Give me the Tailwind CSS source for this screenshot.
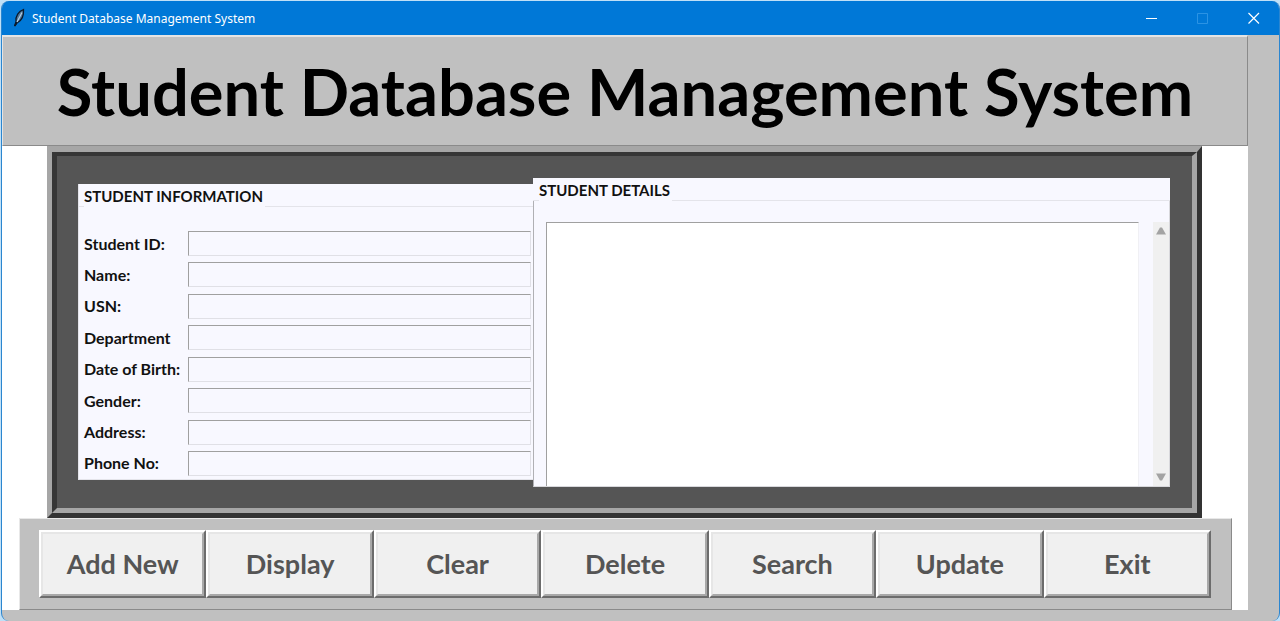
<!DOCTYPE html>
<html lang="en">
<head>
<meta charset="utf-8">
<title>Student Database Management System</title>
<script src="https://cdn.jsdelivr.net/npm/@tailwindcss/browser@4"></script>
</head>
<body class="h-screen overflow-hidden bg-[#bfe0f7] pt-px pl-px font-['Lato',sans-serif] text-black">
<div class="flex h-full flex-col overflow-hidden rounded-lg border-x border-[#2b86d0] bg-[#c0c0c0]">
  <header class="flex h-[34px] shrink-0 items-center bg-[#0078d7] text-white">
    <svg class="ml-2.5 mr-1.5 h-5 w-3.5" viewBox="0 0 14 20"><path d="M11.500 1.500C7 3 3 8 4 14L2.500 18L5 15C9 13 12 8 11.500 1.500Z" fill="#4f7698" stroke="#0b1a2c" stroke-width="1.300"/><path d="M10 4.500L5 14" stroke="#b9cfe2" stroke-width="1.200"/><path d="M4.500 14L3 18" stroke="#0b1a2c" stroke-width="1.500"/></svg>
    <h2 class="grow pt-0.5 font-['Noto_Sans',sans-serif] text-[12px]">Student Database Management System</h2>
    <button aria-label="Minimize" class="flex h-full w-[51px] items-center justify-center"><svg class="h-3 w-3" viewBox="0 0 12 12"><path d="M0 6.500H11" stroke="#fff"/></svg></button>
    <button aria-label="Maximize" disabled class="flex h-full w-[51px] items-center justify-center"><svg class="h-3 w-3" viewBox="0 0 12 12"><path d="M.5 1.500H10.500V11.500H.5Z" fill="none" stroke="#2b93e4"/></svg></button>
    <button aria-label="Close" class="flex h-full w-[51px] items-center justify-center"><svg class="h-3 w-3" viewBox="0 0 12 12"><path d="M.5 1L11 11.500M11 1L.5 11.500" stroke="#fff" stroke-width="1.200"/></svg></button>
  </header>
  <main class="mr-[31px] flex flex-col bg-white">
    <div class="flex h-[111px] items-center justify-center border border-t-2 border-[#e4e4e4] border-r-[#8a8a8a] border-b-[#8a8a8a] bg-[#c0c0c0]">
      <h1 class="text-[65px] leading-none font-bold whitespace-nowrap">Student Database Management System</h1>
    </div>
    <section class="mr-[46px] ml-[45px] border-5 border-t-6 border-t-[#a6a6a6] border-r-[#333] border-b-[#333] border-l-[#a6a6a6]">
      <div class="flex items-start border-5 border-t-4 border-t-[#363636] border-r-[#a6a6a6] border-b-[#a6a6a6] border-l-[#363636] bg-[#555] pt-[22px] pr-[22px] pb-[21px] pl-[21px]">
        <form class="mt-1.5 flex h-[296px] w-[455px] shrink-0 flex-col border-b border-l border-[#e4e4ea] bg-[#f8f8ff] pb-[3px] text-base font-bold">
          <h2 class="flex h-[23px] shrink-0 text-[15px] leading-6 text-[#111]"><span class="w-[5px] border-b border-[#e4e4ea]"></span>STUDENT INFORMATION<span class="ml-0.5 grow border-b border-[#e4e4ea]"></span></h2>
          <div class="mt-6 grid grow auto-rows-[25px] grid-cols-[104px_1fr] content-between items-center pr-0.5 pl-[5px] text-[#111]">
            <label for="sid">Student ID:</label><input id="sid" class="h-full w-full border border-[#e0e0e6] border-t-[#a0a0a0] border-l-[#a0a0a0] px-1">
            <label for="name">Name:</label><input id="name" class="h-full w-full border border-[#e0e0e6] border-t-[#a0a0a0] border-l-[#a0a0a0] px-1">
            <label for="usn">USN:</label><input id="usn" class="h-full w-full border border-[#e0e0e6] border-t-[#a0a0a0] border-l-[#a0a0a0] px-1">
            <label for="dept">Department</label><input id="dept" class="h-full w-full border border-[#e0e0e6] border-t-[#a0a0a0] border-l-[#a0a0a0] px-1">
            <label for="dob" class="whitespace-nowrap">Date of Birth:</label><input id="dob" class="h-full w-full border border-[#e0e0e6] border-t-[#a0a0a0] border-l-[#a0a0a0] px-1">
            <label for="gender">Gender:</label><input id="gender" class="h-full w-full border border-[#e0e0e6] border-t-[#a0a0a0] border-l-[#a0a0a0] px-1">
            <label for="addr">Address:</label><input id="addr" class="h-full w-full border border-[#e0e0e6] border-t-[#a0a0a0] border-l-[#a0a0a0] px-1">
            <label for="phone">Phone No:</label><input id="phone" class="h-full w-full border border-[#e0e0e6] border-t-[#a0a0a0] border-l-[#a0a0a0] px-1">
          </div>
        </form>
        <div class="flex h-[309px] grow flex-col bg-[#f8f8ff]">
          <h2 id="details" class="flex h-[23px] shrink-0 text-[15px] leading-6 font-bold text-[#111]"><span class="w-1.5 border-b border-[#e4e4ea]"></span>STUDENT DETAILS<span class="ml-0.5 grow border-b border-[#e4e4ea]"></span></h2>
          <div class="flex grow border border-t-0 border-[#d8d8dc] border-l-[#b0b0b4] pt-[21px] pl-3">
            <textarea aria-labelledby="details" class="grow resize-none border border-b-0 border-[#f0f0f4] border-t-[#a0a0a0] border-l-[#a0a0a0] bg-white p-1"></textarea>
            <div class="ml-3.5 flex w-4 flex-col items-center justify-between bg-[#f0f0f0] py-1">
              <button aria-label="Scroll up" disabled><svg class="h-2.5 w-2.5" viewBox="0 0 10 10"><path d="M4 1.500H6L10 8.500H0Z" fill="#a3a3a3"/></svg></button>
              <button aria-label="Scroll down" disabled><svg class="h-2.5 w-2.5" viewBox="0 0 10 10"><path d="M0 1.500H10L6 8.500H4Z" fill="#a3a3a3"/></svg></button>
            </div>
          </div>
        </div>
      </div>
    </section>
    <nav class="mr-4 ml-[17px] border border-[#e8e8e8] border-r-[#8a8a8a] border-b-[#8a8a8a] bg-[#c0c0c0] pt-[11px] pr-5 pb-[11px] pl-[19px]">
      <div class="grid grid-cols-7 text-[27px] font-bold text-[#555]">
        <button class="h-[68px] border-2 border-white border-r-[#6c6c6c] border-b-[#6c6c6c]"><span class="flex h-full items-center justify-center border-2 border-[#e6e6e6] border-r-[#a8a8a8] border-b-[#a8a8a8] bg-[#f0f0f0]">Add New</span></button>
        <button class="h-[68px] border-2 border-white border-r-[#6c6c6c] border-b-[#6c6c6c]"><span class="flex h-full items-center justify-center border-2 border-[#e6e6e6] border-r-[#a8a8a8] border-b-[#a8a8a8] bg-[#f0f0f0]">Display</span></button>
        <button class="h-[68px] border-2 border-white border-r-[#6c6c6c] border-b-[#6c6c6c]"><span class="flex h-full items-center justify-center border-2 border-[#e6e6e6] border-r-[#a8a8a8] border-b-[#a8a8a8] bg-[#f0f0f0]">Clear</span></button>
        <button class="h-[68px] border-2 border-white border-r-[#6c6c6c] border-b-[#6c6c6c]"><span class="flex h-full items-center justify-center border-2 border-[#e6e6e6] border-r-[#a8a8a8] border-b-[#a8a8a8] bg-[#f0f0f0]">Delete</span></button>
        <button class="h-[68px] border-2 border-white border-r-[#6c6c6c] border-b-[#6c6c6c]"><span class="flex h-full items-center justify-center border-2 border-[#e6e6e6] border-r-[#a8a8a8] border-b-[#a8a8a8] bg-[#f0f0f0]">Search</span></button>
        <button class="h-[68px] border-2 border-white border-r-[#6c6c6c] border-b-[#6c6c6c]"><span class="flex h-full items-center justify-center border-2 border-[#e6e6e6] border-r-[#a8a8a8] border-b-[#a8a8a8] bg-[#f0f0f0]">Update</span></button>
        <button class="h-[68px] border-2 border-white border-r-[#6c6c6c] border-b-[#6c6c6c]"><span class="flex h-full items-center justify-center border-2 border-[#e6e6e6] border-r-[#a8a8a8] border-b-[#a8a8a8] bg-[#f0f0f0]">Exit</span></button>
      </div>
    </nav>
  </main>
</div>
</body>
</html>
